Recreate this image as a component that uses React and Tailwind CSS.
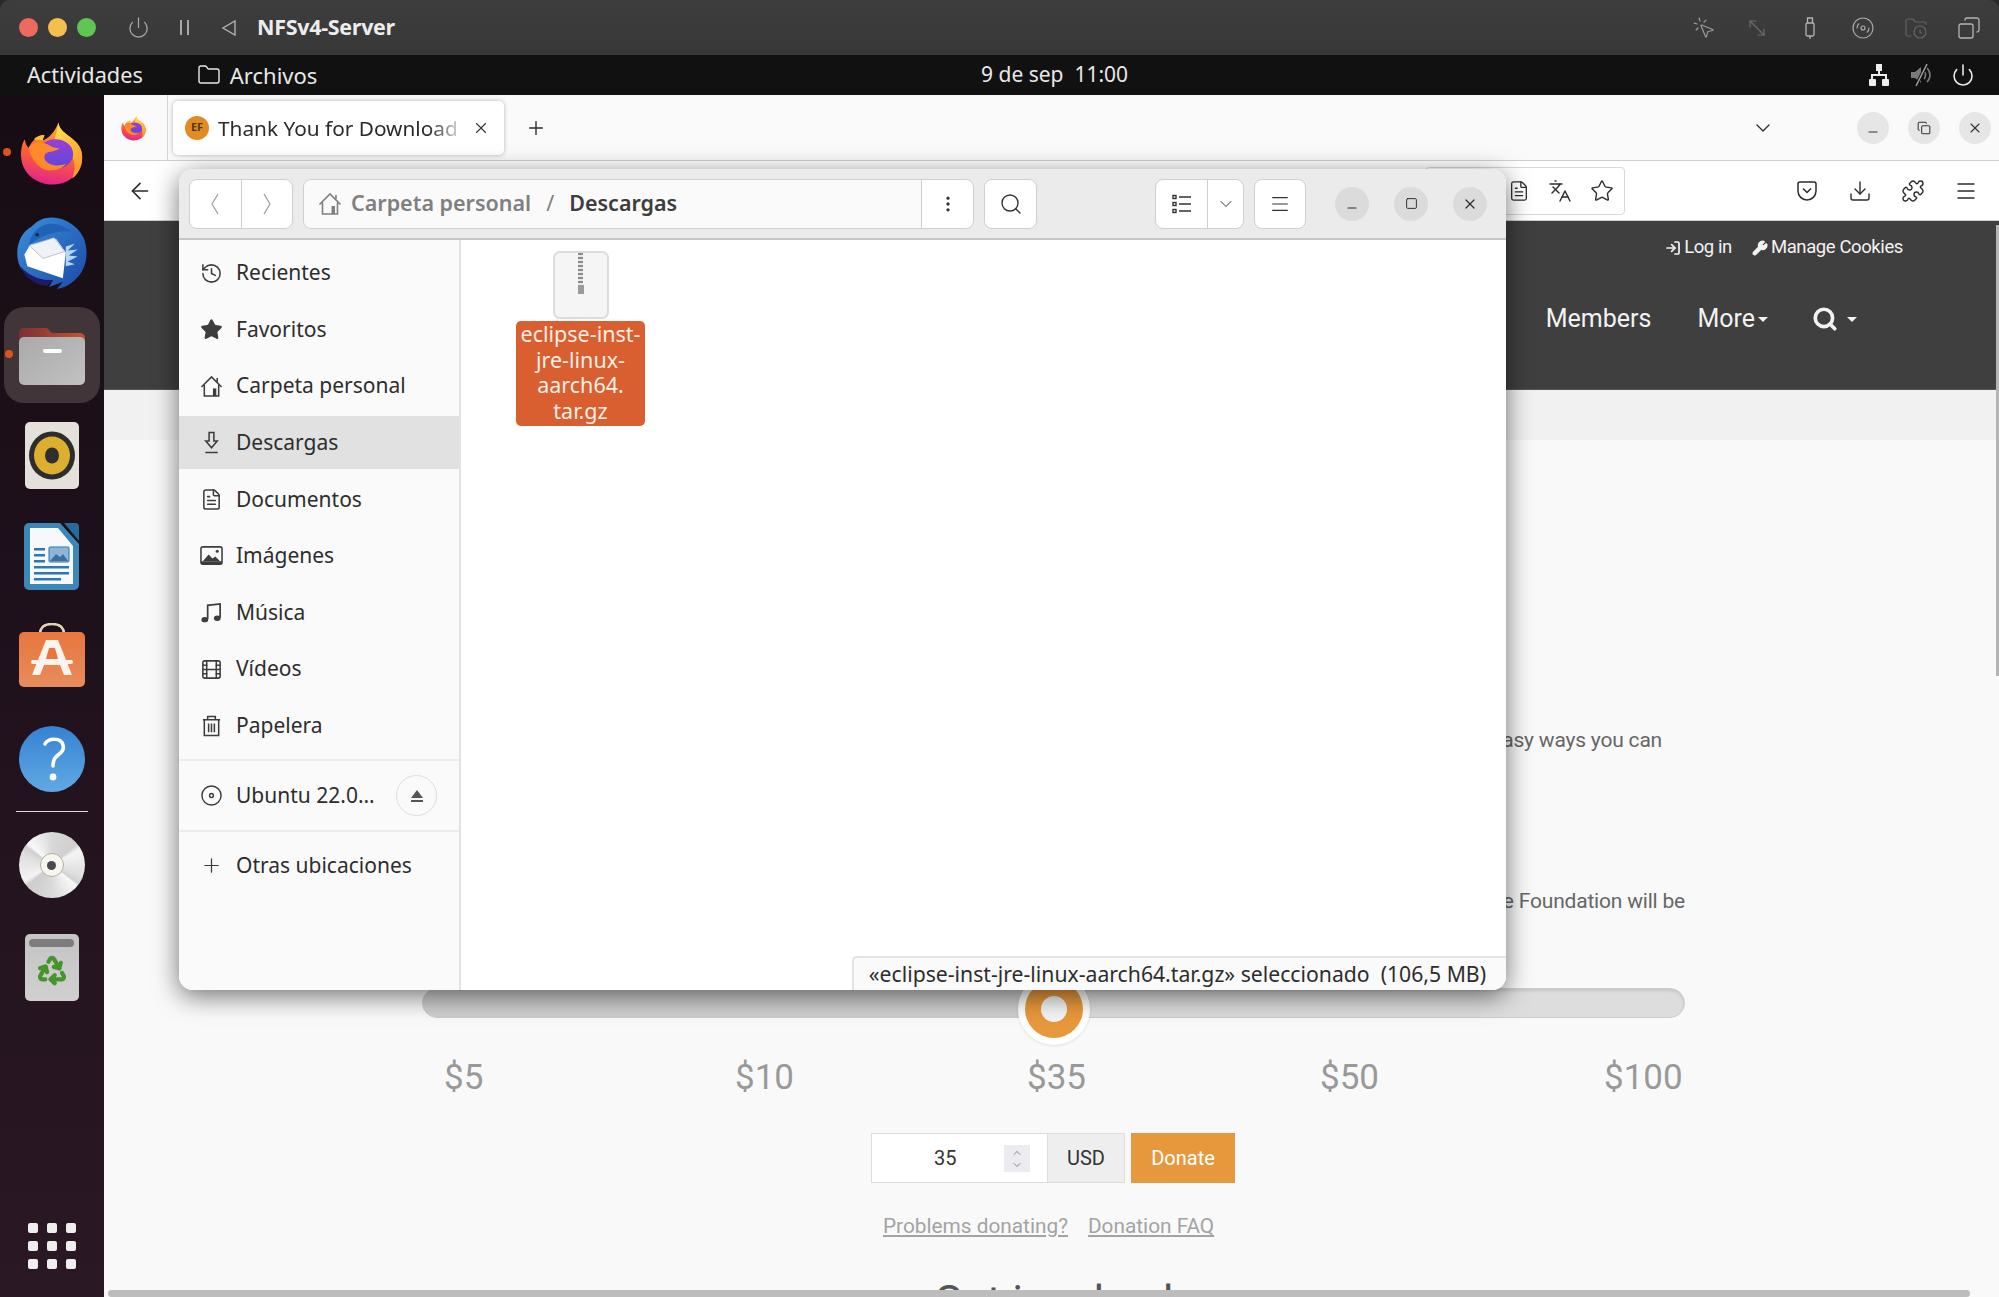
import React from 'react';
import {
  ArrowLeft, ChevronDown, Copy, Disc, Download, EllipsisVertical, FileText, Film,
  History, LogIn, Menu, Minus, Plus, Power, Puzzle, Recycle, Search, Square, Star, Wrench, X, Languages, Folder, MousePointerClick, MoveDiagonal, Disc3, FolderClock,
} from 'lucide-react';

const Firefox = ({ className = 'w-[63px] h-[64px] shrink-0' }) => (
  <svg viewBox="0 0 64 64" className={className}>
    <defs>
      <linearGradient id="ffBody" x1="0.6" y1="0" x2="0.4" y2="1">
        <stop offset="0" stopColor="#ffb52e" />
        <stop offset="0.45" stopColor="#ff6a2b" />
        <stop offset="1" stopColor="#e3238a" />
      </linearGradient>
      <linearGradient id="ffFlame" x1="0" y1="0" x2="0.5" y2="1">
        <stop offset="0" stopColor="#ffe94f" />
        <stop offset="1" stopColor="#ff9a2e" />
      </linearGradient>
      <linearGradient id="ffGlobe" x1="0" y1="0" x2="0" y2="1">
        <stop offset="0" stopColor="#9a3fd8" />
        <stop offset="1" stopColor="#5a48d8" />
      </linearGradient>
    </defs>
    <path d="M39 1c1 10 12 13 19 21 6 7 6 16 4 23-4 12-16 19-29 19C15 64 1 51 1 34c0-6 1-12 4-16 0 4 2 7 4 9 2-6 7-11 13-12-1 2 0 3 2 4 6-3 12-9 15-18z" fill="url(#ffBody)" />
    <path d="M39 1c1 10 12 13 19 21 6 7 6 16 4 23-2 6-5 10-9 13 4-9 3-19-2-26-4-6-11-9-17-11 2-6 4-13 5-20z" fill="url(#ffFlame)" />
    <ellipse cx="36" cy="33" rx="18" ry="15" fill="url(#ffGlobe)" />
    <path d="M9 26c4-5 11-6 16-4 6 2 8 5 15 5-4 4-9 3-13 5-3 2-3 6 0 9 4 4 12 5 20 2-5 6-16 9-24 5C15 43 10 35 9 26z" fill="#ff8a2c" />
    <path d="M14 18c3-3 8-5 11-4l-2 5c-3 0-6 0-9-1z" fill="#ffc233" />
  </svg>
);

const Thunderbird = () => (
  <svg viewBox="0 0 72 74" className="w-[72px] h-[73px]">
    <defs>
      <linearGradient id="tbBody" x1="0" y1="0" x2="1" y2="1">
        <stop offset="0" stopColor="#3a8fdc" />
        <stop offset="1" stopColor="#1b4aa8" />
      </linearGradient>
    </defs>
    <path d="M30 1c16-3 32 7 38 20 6 15 3 33-9 43-5 5-12 8-18 9l6-7-14 5 4-7C20 66 6 60 2 46-2 31 4 16 15 10c4-4 9-8 15-9z" fill="url(#tbBody)" />
    <path d="M4 50c8 10 22 15 33 14l-6 6C19 69 8 62 4 50z" fill="#1d1a66" />
    <path d="M8 38l6-10 26-6 10 14-3 26-36-12-3-12z" fill="#ffffff" />
    <path d="M13 29l25-8 11 14-22 7z" fill="#eef1f5" stroke="#aeb6c2" strokeWidth="0.8" />
    <path d="M13 29c0-10 8-20 19-22 8-1 17 2 24 8-14-2-31 3-43 14z" fill="#1f62b6" />
    <path d="M50 30l9-3-7 7 10-1-9 6 9 1-10 5 7 3-9 2z" fill="#b9d7f2" />
    <circle cx="21" cy="18" r="1.8" fill="#13233f" />
  </svg>
);

const Files = () => (
  <svg viewBox="0 0 66 60" className="w-[66px] h-[60px]">
    <defs>
      <linearGradient id="flTab" x1="0" y1="0" x2="1" y2="0">
        <stop offset="0" stopColor="#7c3036" />
        <stop offset="1" stopColor="#c4552c" />
      </linearGradient>
      <linearGradient id="flBody" x1="0" y1="0" x2="1" y2="1">
        <stop offset="0" stopColor="#a9a9a9" />
        <stop offset="1" stopColor="#c2c2c2" />
      </linearGradient>
    </defs>
    <path d="M0 8a5 5 0 0 1 5-5h22c3 0 4 5 7 5h27a5 5 0 0 1 5 5v20H0z" fill="url(#flTab)" />
    <rect x="0" y="12" width="66" height="48" rx="5" fill="url(#flBody)" />
    <rect x="24" y="24" width="19" height="4" rx="2" fill="#ffffff" />
  </svg>
);

const Rhythmbox = () => (
  <svg viewBox="0 0 54 67" className="w-[54px] h-[67px]">
    <rect x="0" y="0" width="54" height="67" rx="5" fill="#e4e1da" />
    <ellipse cx="27" cy="33.5" rx="23" ry="24" fill="#2d2d30" />
    <ellipse cx="27" cy="33.5" rx="18" ry="19" fill="#dcb02e" />
    <ellipse cx="27" cy="33.5" rx="7" ry="8" fill="#2e2e2e" />
  </svg>
);

const Writer = () => (
  <svg viewBox="0 0 55 67" className="w-[55px] h-[67px]">
    <path d="M40 0h11a4 4 0 0 1 4 4v14z" fill="#276a9c" />
    <path d="M5 0h31l19 21v41a5 5 0 0 1-5 5H5a5 5 0 0 1-5-5V5a5 5 0 0 1 5-5z" fill="#3d87b8" />
    <path d="M6 5h28l15 18v38H6z" fill="#f6f8fa" />
    <rect x="10" y="25" width="11" height="2.5" fill="#2b78b4" />
    <rect x="10" y="31" width="11" height="2.5" fill="#2b78b4" />
    <rect x="10" y="37" width="11" height="2.5" fill="#2b78b4" />
    <rect x="25" y="24" width="20" height="15" rx="1" fill="#8fb6d8" stroke="#2b78b4" strokeWidth="1" />
    <path d="M26 38l6-7 4 3 3-3 5 7z" fill="#3d6f9e" />
    <rect x="10" y="43" width="35" height="2.5" fill="#2b78b4" />
    <rect x="10" y="49" width="35" height="2.5" fill="#2b78b4" />
    <rect x="10" y="55" width="27" height="2.5" fill="#2b78b4" />
  </svg>
);

const Software = () => (
  <svg viewBox="0 0 66 64" className="w-[66px] h-[64px] mb-[6px]">
    <defs>
      <linearGradient id="swBag" x1="0" y1="0" x2="0" y2="1">
        <stop offset="0" stopColor="#e8763d" />
        <stop offset="1" stopColor="#e88c5c" />
      </linearGradient>
    </defs>
    <path d="M21 11C21 3 27 1 33 1s12 2 12 10" fill="none" stroke="#e8d4b8" strokeWidth="2.5" />
    <rect x="0" y="9" width="66" height="55" rx="5" fill="url(#swBag)" />
    <path d="M27 17h12l14 35h-8l-4-10H25l-4 10h-8z" fill="#fbf3ec" />
    <path d="M30 25h6l3 11H27z" fill="#e8763d" />
    <rect x="12" y="37" width="42" height="4" rx="2" fill="#fbf3ec" />
  </svg>
);

const Help = () => (
  <svg viewBox="0 0 66 66" className="w-[66px] h-[66px]">
    <defs>
      <linearGradient id="hlBody" x1="0" y1="0" x2="0" y2="1">
        <stop offset="0" stopColor="#3682d2" />
        <stop offset="1" stopColor="#61a9e4" />
      </linearGradient>
    </defs>
    <circle cx="33" cy="33" r="33" fill="url(#hlBody)" />
    <path d="M26 18c3-6 16-7 18 1 2 7-5 9-8 13-2 3-2 5-2 8" fill="none" stroke="#ffffff" strokeWidth="3.6" strokeLinecap="round" />
    <circle cx="34" cy="51" r="3.4" fill="#ffffff" />
  </svg>
);

const DiscIcon = () => (
  <div className="w-[66px] h-[66px] rounded-full bg-[conic-gradient(#d8d8d8_0deg,#cfcfcf_50deg,#f4f4f4_60deg,#e0e0e0_110deg,#d2d2d2_125deg,#f8f8f8_130deg,#dadada_180deg,#cdcdcd_230deg,#f4f4f4_240deg,#dedede_290deg,#d0d0d0_305deg,#fafafa_312deg,#d8d8d8_360deg)] flex items-center justify-center">
    <div className="w-[24px] h-[24px] rounded-full bg-[#f7f5f0] border border-[#b8ad9c] flex items-center justify-center">
      <div className="w-[9px] h-[9px] rounded-full bg-[#4a4a4a]" />
    </div>
  </div>
);

const TrashDock = () => (
  <div className="w-[54px] h-[67px] rounded-[5px] bg-gradient-to-b from-[#c4c4c4] to-[#d0d0d0] flex flex-col items-center pt-[5px]">
    <div className="w-[45px] h-[8px] rounded-full bg-[#7d7d7d]" />
    <Recycle size={32} strokeWidth={3.2} className="mt-[7px] text-[#47942f]" />
  </div>
);

// small symbolic icons the packages don't have in this shape
const UsbStick = () => (
  <svg viewBox="0 0 24 24" className="w-[24px] h-[26px] text-[#b4b4b4]" fill="none" stroke="currentColor" strokeWidth="1.3">
    <rect x="8" y="7" width="8" height="13" rx="1.5" />
    <path d="M9.5 7V2h5v5M12 20v3" />
  </svg>
);

const NetworkIcon = () => (
  <svg viewBox="0 0 24 24" className="w-[24px] h-[24px] text-[#eeeeee]" fill="currentColor">
    <rect x="9" y="1" width="6" height="7" />
    <rect x="2" y="16" width="7" height="7" rx="1" />
    <rect x="15" y="16" width="7" height="7" rx="1" />
    <path d="M11 8h2v3h7v5h-2v-3H6v3H4v-5h7z" />
  </svg>
);

const MuteIcon = () => (
  <svg viewBox="0 0 24 24" className="w-[24px] h-[24px]" fill="none">
    <path d="M2 9h4l6-5v16l-6-5H2z" fill="#7a7a7a" />
    <path d="M15 8c2 2 2 6 0 8M18 5c4 4 4 10 0 14" stroke="#7a7a7a" strokeWidth="1.6" />
    <path d="M18 1L7 23" stroke="#111111" strokeWidth="3.500" />
    <path d="M18 1L7 23" stroke="#a0a0a0" strokeWidth="1.500" />
  </svg>
);

const Pocket = () => (
  <svg viewBox="0 0 24 24" className="w-[24px] h-[24px]" fill="none" stroke="currentColor" strokeWidth="1.5">
    <path d="M3 5a2 2 0 0 1 2-2h14a2 2 0 0 1 2 2v7a9 9 0 0 1-18 0z" />
    <path d="M8 9.5l4 4 4-4" />
  </svg>
);

const Chevron = ({ dir }) => (
  <svg viewBox="0 0 12 26" className="w-[12px] h-[26px] text-[#9a9a9a]" fill="none" stroke="currentColor" strokeWidth="1.2">
    <path d={dir === 'left' ? 'M9 3L3 13l6 10' : 'M3 3l6 10-6 10'} />
  </svg>
);

const ListIcon = () => (
  <svg viewBox="0 0 22 22" className="w-[22px] h-[22px]" fill="none" stroke="currentColor" strokeWidth="1.4">
    <rect x="2" y="2.5" width="3" height="3" />
    <rect x="2" y="9.5" width="3" height="3" />
    <rect x="2" y="16.5" width="3" height="3" />
    <path d="M8 4h12M8 11h12M8 18h12" />
  </svg>
);

const HomeIcon = ({ className }) => (
  <svg viewBox="0 0 24 24" className={className} fill="none" stroke="currentColor" strokeWidth="1.6">
    <path d="M1.5 12.5L12 2l10.500 10.500M4.500 10.500V22h15V10.500M18 7V3" />
    <rect x="13.500" y="14" width="3.500" height="8" fill="currentColor" stroke="none" />
  </svg>
);

const DownloadIcon = ({ className }) => (
  <svg viewBox="0 0 24 24" className={className} fill="none" stroke="currentColor" strokeWidth="1.6">
    <path d="M9.500 1.500h5v9h3.500L12 17.500 6 10.500h3.500zM5.500 22.500h13" />
  </svg>
);

const ImageIcon = ({ className }) => (
  <svg viewBox="0 0 24 24" className={className} fill="none" stroke="currentColor" strokeWidth="1.6">
    <rect x="1" y="3" width="22" height="18" rx="2" />
    <path d="M3 18l6-7 4 4 3-2 5 5z" fill="currentColor" stroke="none" />
    <rect x="1" y="18" width="22" height="3" fill="currentColor" stroke="none" />
    <circle cx="18" cy="7.500" r="1.600" fill="currentColor" stroke="none" />
  </svg>
);

const MusicIcon = ({ className }) => (
  <svg viewBox="0 0 24 24" className={className} fill="none" stroke="currentColor" strokeWidth="1.8">
    <path d="M8 19V4.500L21 3v14.500" />
    <ellipse cx="5" cy="19.500" rx="3.500" ry="2.800" fill="currentColor" stroke="none" />
    <ellipse cx="18" cy="18" rx="3.500" ry="2.800" fill="currentColor" stroke="none" />
  </svg>
);

const TrashIcon = ({ className }) => (
  <svg viewBox="0 0 24 24" className={className} fill="none" stroke="currentColor" strokeWidth="1.6">
    <path d="M3 6h18M8 6V2.500h8V6M4.500 6v16.500h15V6M9 10v9M12 10v9M15 10v9" />
  </svg>
);

const dockSlot = 'h-[101px] flex items-center justify-center shrink-0 relative';

const Dock = () => (
  <aside className="w-[104px] shrink-0 flex flex-col items-center pt-[7px] pr-[1px] bg-gradient-to-b from-[#170c14] to-[#2a1825]">
    <div className={dockSlot + ' w-full'}>
      <div className="absolute left-[3px] top-[46px] w-[8px] h-[8px] rounded-full bg-[#d9541e]" />
      <Firefox />
    </div>
    <div className={dockSlot}><Thunderbird /></div>
    <div className={dockSlot + ' w-full'}>
      <div className="absolute left-[5px] top-[46px] w-[8px] h-[8px] rounded-full bg-[#d9541e] z-10" />
      <div className="w-[96px] h-[96px] rounded-[20px] bg-[#413539] flex items-center justify-center"><Files /></div>
    </div>
    <div className={dockSlot}><Rhythmbox /></div>
    <div className={dockSlot}><Writer /></div>
    <div className={dockSlot}><Software /></div>
    <div className={dockSlot}><Help /></div>
    <div className="w-[72px] h-px bg-[#d8d8d8] mt-[2px] mb-[20px] shrink-0" />
    <DiscIcon />
    <div className="mt-[36px]"><TrashDock /></div>
    <div className="grid grid-cols-3 gap-x-[9px] gap-y-[8px] mt-auto mb-[28px]">
      {Array.from({ length: 9 }).map((_, i) => (
        <div key={i} className="w-[10px] h-[10px] rounded-[2px] bg-[#eeeeee]" />
      ))}
    </div>
  </aside>
);

const MacBar = () => (
  <div className="h-[55px] shrink-0 bg-gradient-to-b from-[#3d3d3d] to-[#383838] rounded-t-[10px] flex items-center pl-[19px] pr-[18px]">
    <div className="w-[19px] h-[19px] rounded-full bg-[#ee6a5f]" />
    <div className="w-[19px] h-[19px] rounded-full bg-[#f4bf4f] ml-[10px]" />
    <div className="w-[19px] h-[19px] rounded-full bg-[#61c554] ml-[10px]" />
    <Power className="ml-[31px] text-[#a8a8a8]" size={23} strokeWidth={1.3} />
    <div className="ml-[30px] flex gap-[5px]">
      <div className="w-[2px] h-[15px] bg-[#a8a8a8]" />
      <div className="w-[2px] h-[15px] bg-[#a8a8a8]" />
    </div>
    <svg viewBox="0 0 16 18" className="w-[16px] h-[18px] ml-[32px]"><path d="M14 2v14L2 9z" fill="none" stroke="#b0b0b0" strokeWidth="1.4" /></svg>
    <span className="ml-[20px] text-[21.5px] font-bold text-[#ededed] font-['Open_Sans',sans-serif] tracking-[-0.3px]">NFSv4-Server</span>
    <div className="ml-auto flex items-center gap-[29px]">
      <MousePointerClick size={24} strokeWidth={1.2} className="text-[#9c9c9c]" />
      <MoveDiagonal size={24} strokeWidth={1.2} className="text-[#6c6c6c] -scale-x-100" />
      <UsbStick />
      <Disc3 size={24} strokeWidth={1.2} className="text-[#a8a8a8]" />
      <FolderClock size={24} strokeWidth={1.2} className="text-[#636363]" />
      <Copy size={24} strokeWidth={1.3} className="text-[#b4b4b4] -scale-x-100" />
    </div>
  </div>
);

const TopBar = () => (
  <div className="h-[40px] shrink-0 bg-[#111111] relative flex items-center pl-[27px] pr-[24px] text-[#e8e8e8] font-['Noto_Sans',sans-serif] text-[22px]">
    <span className="text-[21.700px]">Actividades</span>
    <Folder size={24} strokeWidth={1.4} className="ml-[54px]" />
    <span className="ml-[9px]">Archivos</span>
    <span className="absolute left-[981px] whitespace-pre text-[21px]">9 de sep  11:00</span>
    <div className="ml-auto flex items-center gap-[18px]">
      <NetworkIcon />
      <MuteIcon />
      <Power size={24} strokeWidth={1.6} />
    </div>
  </div>
);

const TabBar = () => (
  <div className="h-[66px] shrink-0 bg-[#fafafa] border-b border-[#cfcfcf] flex items-center font-['Noto_Sans',sans-serif]">
    <div className="w-[64px] h-full border-r border-[#d5d5d5] flex items-center justify-center">
      <Firefox className="w-[25px] h-[26px] shrink-0 -ml-[4px]" />
    </div>
    <div className="ml-[5px] w-[331px] h-[54px] rounded-[5px] bg-white shadow-[0_0_4px_rgba(0,0,0,0.28)] flex items-center pl-[12px] pr-[14px]">
      <div className="w-[24px] h-[24px] rounded-full bg-[#e28b22] flex items-center justify-center text-[11px] font-bold text-[#4a3a22] shrink-0">EF</div>
      <span className="ml-[9px] mt-[2px] w-[248px] overflow-hidden whitespace-nowrap text-[20.800px] text-[#2b2b2b] [mask-image:linear-gradient(to_right,black_85%,transparent)]">Thank You for Download</span>
      <X size={18} strokeWidth={1.5} className="ml-auto text-[#333333]" />
    </div>
    <Plus size={22} strokeWidth={1.5} className="ml-[21px] text-[#2b2b2b]" />
    <ChevronDown size={24} strokeWidth={1.3} className="ml-auto text-[#2b2b2b]" />
    <div className="flex gap-[19px] ml-[82px] mr-[8px]">
      <div className="w-[32px] h-[32px] rounded-full bg-[#e6e6e6] flex items-center justify-center"><Minus size={14} strokeWidth={1.8} className="text-[#333333] translate-y-[4px]" /></div>
      <div className="w-[32px] h-[32px] rounded-full bg-[#e6e6e6] flex items-center justify-center"><Copy size={14} strokeWidth={1.8} className="text-[#333333]" /></div>
      <div className="w-[32px] h-[32px] rounded-full bg-[#e6e6e6] flex items-center justify-center"><X size={16} strokeWidth={1.6} className="text-[#333333]" /></div>
    </div>
  </div>
);

const NavBar = () => (
  <div className="h-[60px] shrink-0 bg-white border-b border-[#cfcfcf] flex items-center text-[#2b2b2b]">
    <ArrowLeft size={26} strokeWidth={1.5} className="ml-[23px]" />
    <div className="ml-auto h-[48px] w-[200px] border border-[#d8d8d8] rounded-[4px] flex items-center justify-end gap-[18px] pr-[10px] mr-[170px]">
      <FileText size={22} strokeWidth={1.4} />
      <Languages size={24} strokeWidth={1.4} />
      <Star size={24} strokeWidth={1.4} />
    </div>
    <div className="flex items-center gap-[29px] mr-[21px]">
      <Pocket />
      <Download size={24} strokeWidth={1.4} />
      <Puzzle size={24} strokeWidth={1.4} />
      <Menu size={24} strokeWidth={1.4} />
    </div>
  </div>
);

const Page = () => (
  <div className="flex-1 min-h-0 overflow-hidden bg-[#f9f9f9] font-['Roboto',sans-serif] flex flex-col">
    <div className="h-[169px] shrink-0 bg-[#3f3f3f] border-b border-[#555555] text-[#f2f2f2] flex flex-col items-end pr-[96px]">
      <div className="mt-[15px] h-[24px] flex items-center gap-[20px] text-[18.500px] tracking-[-0.4px]">
        <span className="flex items-center gap-[3px]"><LogIn size={16} strokeWidth={2.6} />Log in</span>
        <span className="flex items-center gap-[3px]"><Wrench size={16} strokeWidth={2.6} fill="currentColor" />Manage Cookies</span>
      </div>
      <div className="mt-[41px] h-[36px] flex items-center text-[25px] mr-[46px]">
        <span>Members</span>
        <span className="ml-[46px]">More</span>
        <span className="ml-[3px] w-0 h-0 border-x-[5px] border-x-transparent border-t-[5px] border-t-[#f2f2f2]" />
        <Search size={26} strokeWidth={3.4} className="ml-[44px]" />
        <span className="ml-[9px] w-0 h-0 border-x-[5px] border-x-transparent border-t-[5px] border-t-[#f2f2f2]" />
      </div>
    </div>
    <div className="h-[50px] shrink-0 bg-[#f1f1f1]" />
    <div className="pl-[318px] pr-[314px] flex flex-col text-[#666666] text-[21px]">
      <p className="mt-[286px] h-[28px] leading-[28px] text-right pr-[23px] tracking-[-0.2px]">easy ways you can</p>
      <p className="mt-[133px] h-[28px] leading-[28px] text-right tracking-[-0.2px]">the Foundation will be</p>
      <div className="mt-[73px] h-[30px] relative rounded-full bg-[#dddddd] border border-[#cccccc] shadow-[inset_0_2px_3px_rgba(0,0,0,0.1)]">
        <div className="absolute left-0 top-0 bottom-0 w-[620px] rounded-l-full bg-[#cfcfcf]" />
        <div className="absolute left-[595px] top-[-16px] w-[72px] h-[72px] rounded-full bg-white shadow-[0_1px_3px_rgba(0,0,0,0.1)] flex items-center justify-center">
          <div className="w-[58px] h-[58px] rounded-full bg-[#e8983c] flex items-center justify-center">
            <div className="w-[26px] h-[26px] rounded-full bg-[#f4f4f4]" />
          </div>
        </div>
      </div>
      <div className="mt-[39px] h-[42px] leading-[42px] pl-[22px] flex text-[35px] text-[#999999]">
        <span className="w-[291px]">$5</span>
        <span className="w-[292px]">$10</span>
        <span className="w-[293px]">$35</span>
        <span className="w-[284px]">$50</span>
        <span>$100</span>
      </div>
      <div className="mt-[34px] h-[50px] flex pl-[449px] text-[#333333]">
        <div className="w-[177px] bg-white border border-[#dddddd] flex items-center relative">
          <span className="ml-[62px] text-[20px]">35</span>
          <div className="absolute left-[132px] top-[11px] w-[26px] h-[27px] bg-[#ececf0] flex flex-col items-center justify-center text-[#666666]">
            <ChevronDown size={12} strokeWidth={1.5} className="rotate-180" />
            <ChevronDown size={12} strokeWidth={1.5} />
          </div>
        </div>
        <div className="w-[77px] bg-[#eeeeee] border border-[#dddddd] border-l-0 flex items-center justify-center text-[20px]">USD</div>
        <div className="ml-[6px] w-[104px] bg-[#e8983c] flex items-center justify-center text-white text-[20px]">Donate</div>
      </div>
      <div className="mt-[31px] h-[24px] flex pl-[461px] gap-[20px] text-[#a3a3a3] text-[20.800px] leading-[24px] underline">
        <span>Problems donating?</span>
        <span>Donation FAQ</span>
      </div>
      <div className="mt-[38px] text-center text-[44px] leading-[52px] text-[#555555] whitespace-nowrap">Get involved</div>
    </div>
  </div>
);

const iconCls = 'w-[23px] h-[23px] text-[#3d3d3d] shrink-0';

const sideItems = [
  { label: 'Recientes', icon: <History size={23} strokeWidth={1.6} className={iconCls} /> },
  { label: 'Favoritos', icon: <Star size={23} strokeWidth={1.5} className={iconCls} fill="currentColor" /> },
  { label: 'Carpeta personal', icon: <HomeIcon className={iconCls} /> },
  { label: 'Descargas', icon: <DownloadIcon className={iconCls} />, active: true },
  { label: 'Documentos', icon: <FileText size={23} strokeWidth={1.6} className={iconCls} /> },
  { label: 'Imágenes', icon: <ImageIcon className={iconCls} /> },
  { label: 'Música', icon: <MusicIcon className={iconCls} /> },
  { label: 'Vídeos', icon: <Film size={23} strokeWidth={1.6} className={iconCls} /> },
  { label: 'Papelera', icon: <TrashIcon className={iconCls} /> },
];

const SideRow = ({ label, icon, active }) => (
  <div className={`h-[53px] mb-[3.6px] flex items-center pl-[21px] ${active ? 'bg-[#e1e1e1]' : ''}`}>
    {icon}
    <span className="ml-[13px]">{label}</span>
  </div>
);

const toolBtn = 'h-[50px] bg-white border border-[#cfcfcf] rounded-[8px] flex items-center justify-center text-[#333333]';

const FileWindow = () => (
  <div className="absolute left-[179px] top-[169px] w-[1327px] h-[821px] rounded-[14px] overflow-hidden bg-white shadow-[0_6px_26px_rgba(0,0,0,0.55)] flex flex-col font-['Noto_Sans',sans-serif] text-[#2d2d2d]">
    <div className="h-[71px] shrink-0 bg-[#ebebeb] border-b-2 border-[#c6c6c6] flex items-center pl-[10px]">
      <div className={toolBtn + ' w-[104px]'}>
        <div className="flex-1 flex justify-center"><Chevron dir="left" /></div>
        <div className="flex-1 h-full border-l border-[#cfcfcf] flex items-center justify-center"><Chevron dir="right" /></div>
      </div>
      <div className={toolBtn + ' ml-[10px] w-[671px] !justify-start'}>
        <div className="flex-1 h-full bg-[#fafafa] rounded-l-[8px] flex items-center pl-[14px] text-[21.500px] font-semibold">
          <HomeIcon className="w-[24px] h-[24px] text-[#808080]" />
          <span className="ml-[9px] text-[#808080]">Carpeta personal</span>
          <span className="ml-[15px] text-[#808080] font-normal">/</span>
          <span className="ml-[15px] text-[#3d3d3d]">Descargas</span>
        </div>
        <div className="w-[52px] h-full border-l border-[#cfcfcf] flex items-center justify-center"><EllipsisVertical size={20} strokeWidth={2} /></div>
      </div>
      <div className={toolBtn + ' ml-[10px] w-[53px]'}><Search size={24} strokeWidth={1.4} /></div>
      <div className={toolBtn + ' ml-[118px] w-[89px]'}>
        <div className="w-[51px] flex justify-center"><ListIcon /></div>
        <div className="flex-1 h-full border-l border-[#cfcfcf] flex items-center justify-center"><ChevronDown size={20} strokeWidth={1.2} /></div>
      </div>
      <div className={toolBtn + ' ml-[10px] w-[52px]'}><Menu size={22} strokeWidth={1.3} /></div>
      <div className="ml-[29px] flex gap-[25px]">
        <div className="w-[34px] h-[34px] rounded-full bg-[#dbdbdb] flex items-center justify-center"><Minus size={14} strokeWidth={1.8} className="translate-y-[4px]" /></div>
        <div className="w-[34px] h-[34px] rounded-full bg-[#dbdbdb] flex items-center justify-center"><Square size={13} strokeWidth={1.8} /></div>
        <div className="w-[34px] h-[34px] rounded-full bg-[#dbdbdb] flex items-center justify-center"><X size={16} strokeWidth={1.8} /></div>
      </div>
    </div>
    <div className="flex-1 flex min-h-0">
      <div className="w-[282px] shrink-0 bg-[#fafafa] border-r-2 border-[#e2e2e2] pt-[6.500px] text-[21px]">
        {sideItems.map((item) => <SideRow key={item.label} {...item} />)}
        <div className="h-[2px] bg-[#ececec] mt-[7px]" />
        <div className="h-[69px] flex items-center pl-[21px]">
          <Disc size={23} strokeWidth={1.5} className="text-[#3d3d3d]" />
          <span className="ml-[13px]">Ubuntu 22.0…</span>
          <div className="ml-auto mr-[22px] w-[41px] h-[41px] rounded-full border border-[#dddddd] flex flex-col items-center justify-center gap-[2px]">
            <div className="w-0 h-0 border-x-[6px] border-x-transparent border-b-[8px] border-b-[#555555]" />
            <div className="w-[12px] h-[2px] bg-[#555555]" />
          </div>
        </div>
        <div className="h-[2px] bg-[#ececec]" />
        <div className="h-[67px] flex items-center pl-[21px]">
          <Plus size={23} strokeWidth={1.3} className="text-[#3d3d3d]" />
          <span className="ml-[13px]">Otras ubicaciones</span>
        </div>
      </div>
      <div className="flex-1 relative bg-white pt-[11px] pl-[55px]">
        <div className="w-[129px] flex flex-col items-center">
          <div className="w-[56px] h-[68px] rounded-[7px] bg-[#f5f5f5] border-2 border-[#dcdcdc] flex flex-col items-center">
            <div className="w-[5px] h-[32px] bg-[repeating-linear-gradient(to_bottom,#8a8a8a_0,#8a8a8a_2px,#e8e8e8_2px,#e8e8e8_4px)]" />
            <div className="w-[6px] h-[9px] bg-[#9a9a9a]" />
          </div>
          <div className="mt-[2px] w-full h-[105px] rounded-[5px] bg-[#d95f30] text-[#fdeee6] text-[21.500px] leading-[25.500px] text-center">
            eclipse-inst-<br />jre-linux-<br />aarch64.<br />tar.gz
          </div>
        </div>
        <div className="absolute right-0 bottom-0 w-[654px] h-[34px] bg-[#fafafa] border-l-2 border-t-2 border-[#e2e2e2] rounded-tl-[5px] flex items-center justify-end pr-[20px] text-[21.200px] whitespace-pre">«eclipse-inst-jre-linux-aarch64.tar.gz» seleccionado  (106,5 MB)</div>
      </div>
    </div>
  </div>
);

const App = () => (
  <div className="relative w-[1999px] h-[1297px] overflow-hidden bg-[#2a2a2a] flex flex-col">
    <MacBar />
    <TopBar />
    <div className="flex-1 min-h-0 flex">
      <Dock />
      <div className="flex-1 min-w-0 flex flex-col relative">
        <TabBar />
        <NavBar />
        <Page />
        <div className="absolute left-[4px] right-[29px] bottom-0 h-[7px] rounded-full bg-[#bdbdbd]" />
        <div className="absolute right-0 top-[130px] w-[3px] h-[451px] bg-[#b5b5b5]" />
      </div>
    </div>
    <FileWindow />
  </div>
);

export default App;
